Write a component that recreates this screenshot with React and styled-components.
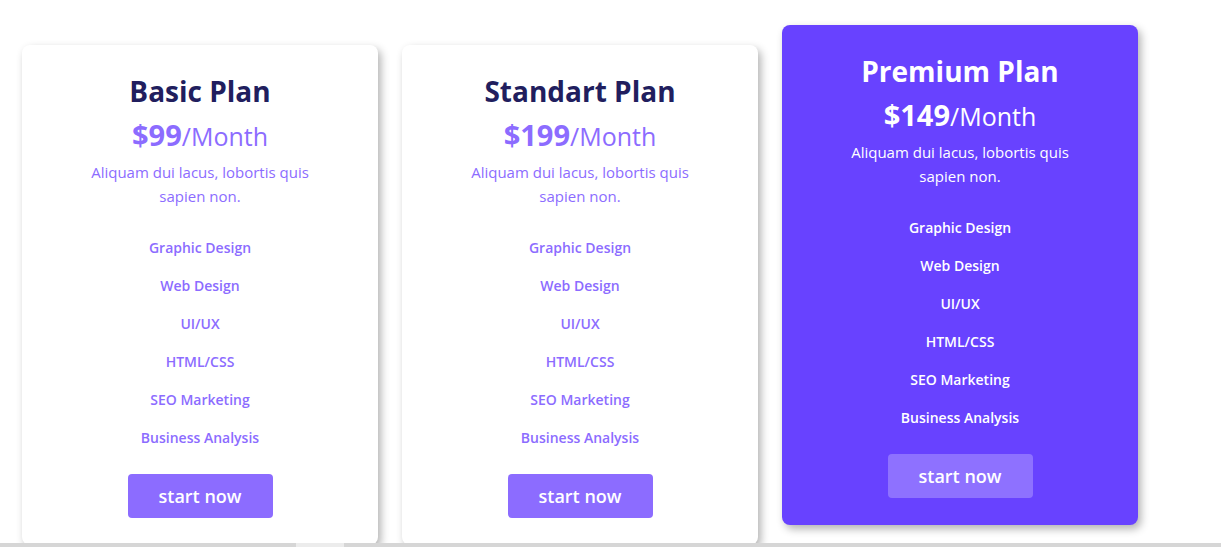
import React from 'react';
import styled, { createGlobalStyle } from 'styled-components';

const GlobalStyle = createGlobalStyle`
  html, body {
    margin: 0;
    padding: 0;
    background: #fff;
    font-family: "Segoe UI", "Open Sans", "Noto Sans", sans-serif;
  }
`;

const Page = styled.div`
  display: flex;
  flex-direction: column;
  height: 547px;
  overflow: hidden;
`;

const Cards = styled.div`
  flex: 1;
  display: flex;
  align-items: flex-start;
  gap: 24px;
  padding: 45px 0 0 22px;
  overflow: hidden;
`;

const Card = styled.div`
  flex: 0 0 356px;
  box-sizing: border-box;
  height: 500px;
  display: flex;
  flex-direction: column;
  align-items: center;
  padding-top: 27px;
  border-radius: 8px;
  background: ${(p) => (p.$featured ? '#6842ff' : '#fff')};
  color: ${(p) => (p.$featured ? '#fff' : '#8c6cff')};
  box-shadow: 3px 4px 9px rgba(0, 0, 0, 0.3);
  transform: ${(p) => (p.$featured ? 'translateY(-20px)' : 'none')};
`;

const Title = styled.h2`
  margin: 0;
  font-size: 28px;
  line-height: 38px;
  font-weight: 700;
  color: ${(p) => (p.$featured ? '#fff' : '#211e5e')};
`;

const Price = styled.div`
  margin-top: 8px;
  font-size: 25px;
  line-height: 34px;
  font-weight: 400;

  strong {
    font-size: 29px;
    font-weight: 700;
  }
`;

const Desc = styled.p`
  margin: 7px 0 0;
  width: 240px;
  text-align: center;
  font-size: 15px;
  line-height: 24px;
`;

const Features = styled.ul`
  list-style: none;
  margin: 30px 0 0;
  padding: 0;
  display: flex;
  flex-direction: column;
  align-items: center;
  gap: 18px;
`;

const Feature = styled.li`
  font-size: 14px;
  line-height: 20px;
  font-weight: 600;
`;

const Button = styled.button`
  margin-top: 26px;
  width: 145px;
  height: 44px;
  border: none;
  border-radius: 4px;
  background: ${(p) => (p.$featured ? 'rgba(255, 255, 255, 0.25)' : '#8c6cff')};
  color: #fff;
  font-family: inherit;
  font-size: 18px;
  font-weight: 600;
  cursor: pointer;
`;

const ScrollTrack = styled.div`
  flex: 0 0 4px;
  display: flex;
  background: #d6d6d6;
`;

const ScrollThumb = styled.div`
  margin-left: 296px;
  width: 48px;
  background: #ececec;
`;

const features = ['Graphic Design', 'Web Design', 'UI/UX', 'HTML/CSS', 'SEO Marketing', 'Business Analysis'];

const plans = [
  { name: 'Basic Plan', price: '$99' },
  { name: 'Standart Plan', price: '$199' },
  { name: 'Premium Plan', price: '$149', featured: true },
];

const App = () => (
  <>
    <GlobalStyle />
    <Page>
      <Cards>
        {plans.map((plan) => (
          <Card key={plan.name} $featured={plan.featured}>
            <Title $featured={plan.featured}>{plan.name}</Title>
            <Price>
              <strong>{plan.price}</strong>/Month
            </Price>
            <Desc>Aliquam dui lacus, lobortis quis sapien non.</Desc>
            <Features>
              {features.map((f) => (
                <Feature key={f}>{f}</Feature>
              ))}
            </Features>
            <Button $featured={plan.featured}>start now</Button>
          </Card>
        ))}
      </Cards>
      <ScrollTrack>
        <ScrollThumb />
      </ScrollTrack>
    </Page>
  </>
);

export default App;
